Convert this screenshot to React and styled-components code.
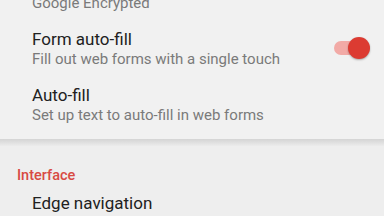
import React from "react";
import styled, { createGlobalStyle } from "styled-components";

const Global = createGlobalStyle`
  html, body {
    margin: 0;
    padding: 0;
    background: #eeeeee;
    overflow: hidden;
  }
  body {
    font-family: Roboto, "Noto Sans", sans-serif;
    -webkit-font-smoothing: antialiased;
  }
`;

const Page = styled.div`
  width: 384px;
  height: 216px;
  overflow: hidden;
  background: #eeeeee;
`;

const Card = styled.div`
  background: #f1f1f1;
  margin-top: ${(p) => p.$offset || 0}px;
  padding-bottom: 6px;
`;

const Shadow = styled.div`
  height: 7px;
  background: linear-gradient(#d4d4d4, #e2e2e2 60%, #ececec);
`;

const Item = styled.div`
  display: flex;
  align-items: ${(p) => (p.$partial ? "flex-end" : "center")};
  height: 56px;
  padding: 0 14px ${(p) => (p.$partial ? "8px" : "0")} 32px;
  box-sizing: border-box;
`;

const Texts = styled.div`
  flex: 1;
  display: flex;
  flex-direction: column;
`;

const Title = styled.div`
  font-size: 17px;
  line-height: 20px;
  color: #212121;
`;

const Subtitle = styled.div`
  font-size: 15px;
  line-height: 20px;
  color: #7a7a7a;
`;

const Section = styled.div`
  padding-top: 20px;
`;

const Header = styled.div`
  font-size: 14.5px;
  font-weight: 500;
  line-height: 20px;
  color: #d84a43;
  padding-left: 17px;
  margin-bottom: 7px;
`;

const Row = styled.div`
  padding-left: 32px;
`;

const Switch = styled.div`
  position: relative;
  width: 36px;
  height: 20px;
  flex-shrink: 0;
  margin-top: -3px;

  .track {
    position: absolute;
    left: 0;
    top: 3px;
    width: 34px;
    height: 14px;
    border-radius: 7px;
    background: #f2aaa6;
  }

  .thumb {
    position: absolute;
    right: 0;
    top: -1px;
    width: 22px;
    height: 22px;
    border-radius: 50%;
    background: #dc3b32;
    box-shadow: 0 1px 2px rgba(0, 0, 0, 0.3);
  }
`;

const items = [
  { subtitle: "Google Encrypted", partial: true },
  { title: "Form auto-fill", subtitle: "Fill out web forms with a single touch", toggle: true },
  { title: "Auto-fill", subtitle: "Set up text to auto-fill in web forms" },
];

export default function App() {
  return (
    <Page>
      <Global />
      <Card $offset={-35}>
        {items.map((it) => (
          <Item key={it.subtitle} $partial={it.partial}>
            <Texts>
              {it.title && <Title>{it.title}</Title>}
              <Subtitle>{it.subtitle}</Subtitle>
            </Texts>
            {it.toggle && (
              <Switch>
                <div className="track" />
                <div className="thumb" />
              </Switch>
            )}
          </Item>
        ))}
      </Card>
      <Shadow />
      <Section>
        <Header>Interface</Header>
        <Row>
          <Title>Edge navigation</Title>
        </Row>
      </Section>
    </Page>
  );
}
